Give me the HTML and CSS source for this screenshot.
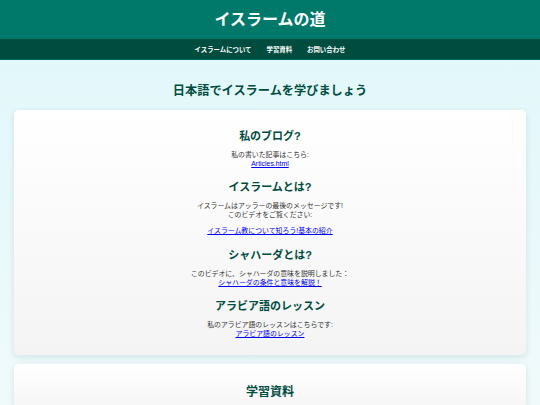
FILE: index.html
```html
<!DOCTYPE html>
<html lang="ja">
<head>
<meta charset="utf-8">
<title>イスラームの道</title>
<link rel="stylesheet" href="styles.css">
</head>
<body>
<header class="site-header">
  <h1 class="site-title">イスラームの道</h1>
</header>
<nav class="site-nav">
  <a href="#" class="nav-link">イスラームについて</a>
  <a href="#" class="nav-link">学習資料</a>
  <a href="#" class="nav-link">お問い合わせ</a>
</nav>
<main class="main">
  <h2 class="page-title">日本語でイスラームを学びましょう</h2>
  <div class="card">
    <section class="block">
      <h3 class="block-title">私のブログ?</h3>
      <p class="text">私の書いた記事はこちら:<br><a href="#">Articles.html</a></p>
    </section>
    <section class="block">
      <h3 class="block-title">イスラームとは?</h3>
      <p class="text">イスラームはアッラーの最後のメッセージです!<br>このビデオをご覧ください:</p>
      <p class="text gap"><a href="#">イスラーム教について知ろう!基本の紹介</a></p>
    </section>
    <section class="block">
      <h3 class="block-title">シャハーダとは?</h3>
      <p class="text">このビデオに、シャハーダの意味を説明しました：<br><a href="#">シャハーダの条件と意味を解説！</a></p>
    </section>
    <section class="block">
      <h3 class="block-title">アラビア語のレッスン</h3>
      <p class="text">私のアラビア語のレッスンはこちらです:<br><a href="#">アラビア語のレッスン</a></p>
    </section>
  </div>
  <div class="card card-second">
    <h2 class="card-title">学習資料</h2>
  </div>
</main>
</body>
</html>
```

FILE: styles.css
```css
html, body {
  margin: 0;
  padding: 0;
}
body {
  font-family: "Liberation Sans", Arial, "Noto Sans CJK JP", sans-serif;
  background: linear-gradient(to bottom, #e0f7fa 0px, #f0fafb 405px, #ffffff 700px);
  min-height: 405px;
  color: #333;
}
.site-header {
  background: #00796b;
  height: 39px;
  display: flex;
  align-items: center;
  justify-content: center;
}
.site-title {
  margin: 0;
  color: #fff;
  font-size: 16px;
  font-weight: bold;
  line-height: 20px;
}
.site-nav {
  background: #004d40;
  height: 21px;
  display: flex;
  align-items: center;
  justify-content: center;
  gap: 15px;
  border-bottom: 1px solid #00695c;
  box-sizing: border-box;
}
.nav-link {
  color: #fff;
  text-decoration: none;
  font-weight: bold;
  font-size: 6.4px;
}
.main {
  margin: 0 14px;
  padding-top: 24px;
  padding-bottom: 20px;
}
.page-title {
  margin: 0 0 11px;
  text-align: center;
  color: #004d40;
  font-size: 12.2px;
  line-height: 15px;
}
.card {
  background: linear-gradient(to bottom, #ffffff, #f4f4f4);
  border-radius: 5px;
  box-shadow: 0 2px 6px rgba(0, 60, 70, 0.12);
  padding: 19px 10px 17px;
  text-align: center;
}
.card-second {
  margin-top: 9px;
  padding-top: 21px;
}
.block + .block {
  margin-top: 12px;
}
.block-title {
  margin: 0 0 8px;
  color: #004d40;
  font-size: 11px;
  line-height: 14px;
}
.card-title {
  margin: 0;
  color: #004d40;
  font-size: 12px;
  line-height: 15px;
}
.text {
  margin: 0;
  font-size: 6.9px;
  line-height: 8.6px;
  color: #333;
}
.text.gap {
  margin-top: 8px;
}
.text a {
  color: #0000ee;
}
```
